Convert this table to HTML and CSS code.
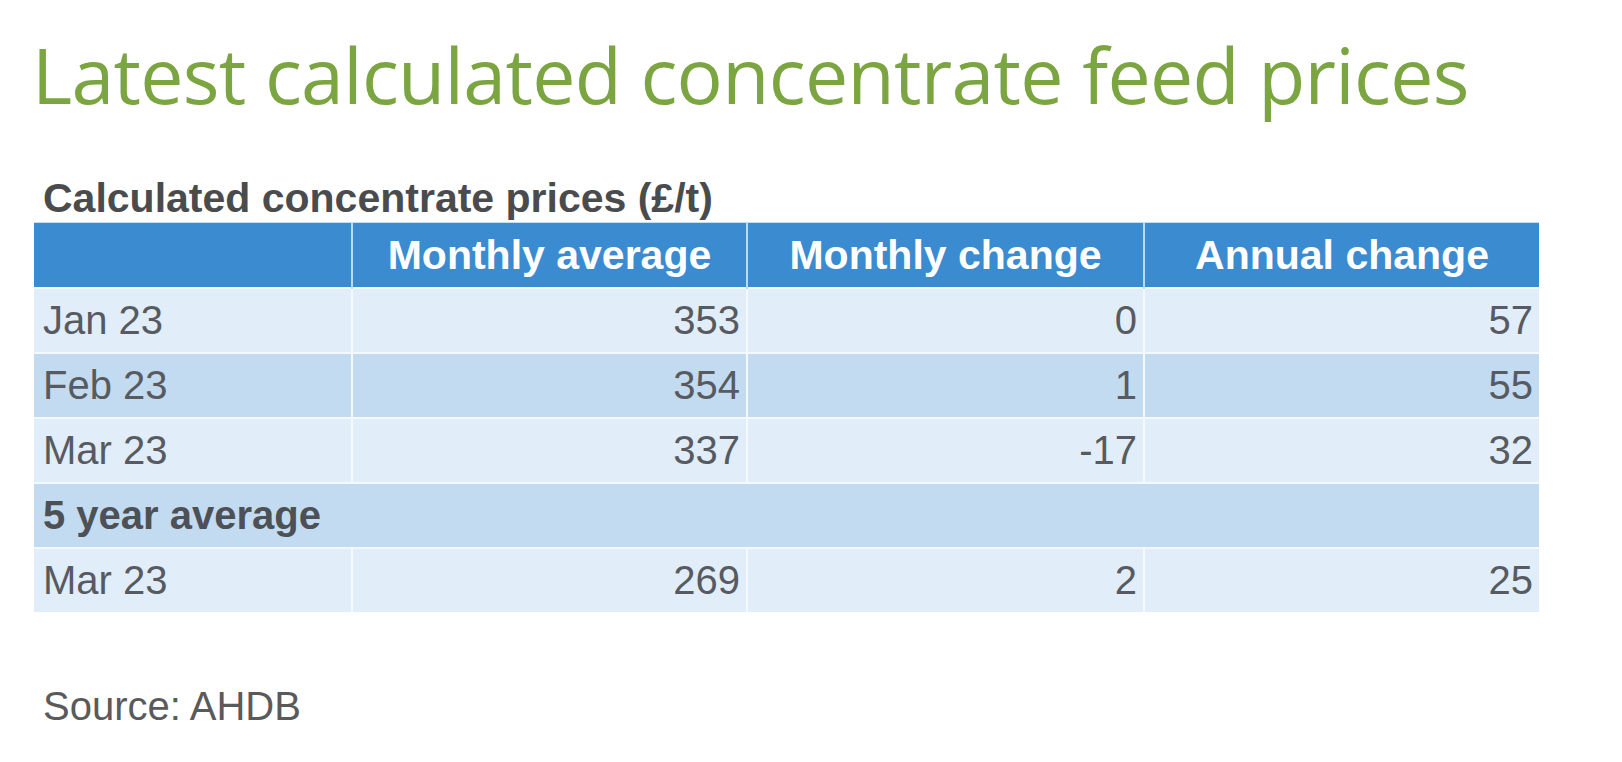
FILE: index.html
```html
<!DOCTYPE html>
<html lang="en">
<head>
<meta charset="utf-8">
<title>Latest calculated concentrate feed prices</title>
<link rel="stylesheet" href="styles.css">
</head>
<body>
<main class="page">
  <h1 class="title">Latest calculated concentrate feed prices</h1>
  <section class="figure">
    <h2 class="caption">Calculated concentrate prices (£/t)</h2>
    <table class="prices">
      <colgroup>
        <col class="c1"><col class="c2"><col class="c3"><col class="c4">
      </colgroup>
      <thead>
        <tr>
          <th></th>
          <th>Monthly average</th>
          <th>Monthly change</th>
          <th>Annual change</th>
        </tr>
      </thead>
      <tbody>
        <tr class="light"><td>Jan 23</td><td class="num">353</td><td class="num">0</td><td class="num">57</td></tr>
        <tr class="dark"><td>Feb 23</td><td class="num">354</td><td class="num">1</td><td class="num">55</td></tr>
        <tr class="light"><td>Mar 23</td><td class="num">337</td><td class="num">-17</td><td class="num">32</td></tr>
        <tr class="dark section"><td colspan="4">5 year average</td></tr>
        <tr class="light"><td>Mar 23</td><td class="num">269</td><td class="num">2</td><td class="num">25</td></tr>
      </tbody>
    </table>
    <p class="source">Source: AHDB</p>
  </section>
</main>
</body>
</html>
```
FILE: styles.css
```css
html, body {
  margin: 0;
  padding: 0;
  background: #ffffff;
}

.page {
  padding: 25px 0 0 34px;
}

.title {
  margin: 0 0 0 -2px;
  font-family: "Open Sans", "Noto Sans", sans-serif;
  font-weight: 400;
  font-size: 77px;
  line-height: 100px;
  letter-spacing: -0.7px;
  color: #7ba541;
  white-space: nowrap;
}

.figure {
  margin-top: 49px;
  width: 1505px;
  font-family: "Liberation Sans", Arial, sans-serif;
}

.caption {
  margin: 0 0 0 9px;
  font-size: 41px;
  line-height: 48px;
  font-weight: 700;
  color: #4a4b4d;
}

.prices {
  width: 1505px;
  table-layout: fixed;
  border-collapse: collapse;
  font-size: 40px;
  color: #575b61;
}

.c1 { width: 318px; }
.c2 { width: 395px; }
.c3 { width: 397px; }
.c4 { width: 395px; }

.prices th {
  height: 64px;
  padding: 0;
  background: #3b8bd0;
  color: #ffffff;
  font-weight: 700;
  font-size: 41px;
  text-align: center;
  border-top: 1px solid #bfe3f3;
}

.prices th + th {
  border-left: 2px solid #b7dcf1;
}

.prices td {
  height: 63px;
  padding: 0 6px 0 9px;
  border-top: 2px solid #f4f9fd;
  white-space: nowrap;
}

.prices td + td {
  border-left: 2px solid #f4f9fd;
}

.prices .num {
  text-align: right;
}

.prices .light td {
  background: #e1eefa;
}

.prices .dark td {
  background: #c2dbf1;
}

.prices .section td {
  font-weight: 700;
  color: #4d5156;
}

.source {
  margin: 71px 0 0 9px;
  font-size: 40px;
  line-height: 46px;
  color: #5a5a5a;
}
```
